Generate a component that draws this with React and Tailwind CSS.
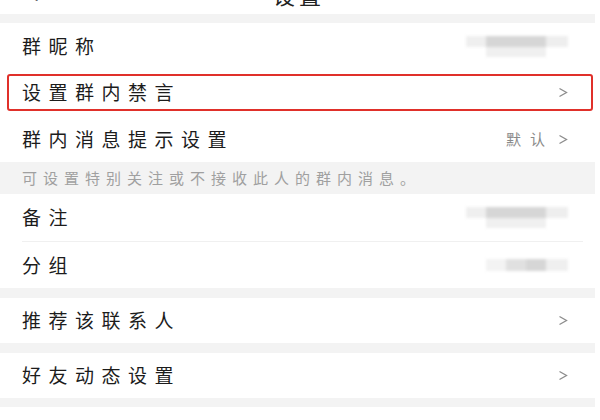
import React from "react";

const Chevron = () => (
  <svg width="10" height="11" viewBox="0 0 10 11" className="shrink-0">
    <polyline points="1.5,1.5 8.5,5.5 1.5,9.5" fill="none" stroke="#8c8c8c" strokeWidth="1.3" />
  </svg>
);

const Blurred = ({ wide = true }) => (
  <div className="flex flex-col blur-[1.5px]">
    <div className="flex h-[11px]">
      <div className={wide ? "w-[20px] bg-[#efefef]" : "w-[20px] bg-[#f7f7f7]"} />
      <div className="w-[60px] bg-[#d6d6d6]" />
      <div className="w-[22px] bg-[#eeeeee]" />
    </div>
    <div className="flex h-[10px]">
      <div className="w-[20px]" />
      <div className={wide ? "w-[60px] bg-[#f0f0f0]" : "w-[60px]"} />
    </div>
  </div>
);

const Band = ({ h = "h-[9px]" }) => <div className={`${h} bg-[#f3f3f3] mr-[5px]`} />;

const Row = ({ label, children, className = "h-[46px]" }) => (
  <div className={`flex items-center justify-between pl-[22px] pr-[32px] ${className}`}>
    <span className="text-[19px] tracking-[7.5px] text-[#1c1c1c]">{label}</span>
    {children}
  </div>
);

export default function App() {
  return (
    <div
      className="w-[600px] h-[420px] bg-white overflow-hidden"
      style={{ fontFamily: '"Noto Sans CJK SC", "Noto Sans", sans-serif' }}
    >
      {/* top bar, mostly scrolled off */}
      <div className="h-[14px] overflow-hidden">
        <div className="h-[40px] -mt-[26px] flex items-center relative">
          <span className="ml-[26px] text-[22px] text-[#222] leading-none">&lt;</span>
          <span className="absolute left-[273px] text-[22px] tracking-[4px] text-[#222] leading-none">设置</span>
        </div>
      </div>
      <Band />

      <Row label="群昵称" className="h-[46px] pr-[30px]">
        <Blurred />
      </Row>

      <div className="h-[47px] flex items-center px-[7px]">
        <div className="w-full h-[37px] border-2 border-[#e0302a] rounded-[3px] flex items-center justify-between pl-[13px] pr-[23px]">
          <span className="text-[19px] tracking-[7.5px] text-[#1c1c1c]">设置群内禁言</span>
          <Chevron />
        </div>
      </div>

      <Row label="群内消息提示设置">
        <div className="flex items-center gap-[13px]">
          <span className="text-[15px] tracking-[9px] text-[#8a8a8a] -mr-[9px]">默认</span>
          <Chevron />
        </div>
      </Row>

      <div className="h-[32px] bg-[#f3f3f3] mr-[5px] flex items-center pl-[22px]">
        <span className="text-[15px] tracking-[6px] text-[#a0a0a0]">可设置特别关注或不接收此人的群内消息。</span>
      </div>

      <Row label="备注" className="h-[47px] pr-[30px]">
        <Blurred />
      </Row>
      <div className="h-px bg-[#f0f0f0] ml-[22px] mr-[17px]" />
      <Row label="分组" className="h-[46px] pr-[30px]">
        <div className="flex h-[12px] blur-[1.5px]">
          <div className="w-[20px] bg-[#f3f3f3]" />
          <div className="w-[20px] bg-[#e0e0e0]" />
          <div className="w-[20px] bg-[#d6d6d6]" />
          <div className="w-[22px] bg-[#efefef]" />
        </div>
      </Row>

      <Band h="h-[10px]" />
      <Row label="推荐该联系人" className="h-[45px]">
        <Chevron />
      </Row>
      <Band h="h-[10px]" />
      <Row label="好友动态设置" className="h-[45px]">
        <Chevron />
      </Row>
      <Band h="h-[9px]" />
    </div>
  );
}
